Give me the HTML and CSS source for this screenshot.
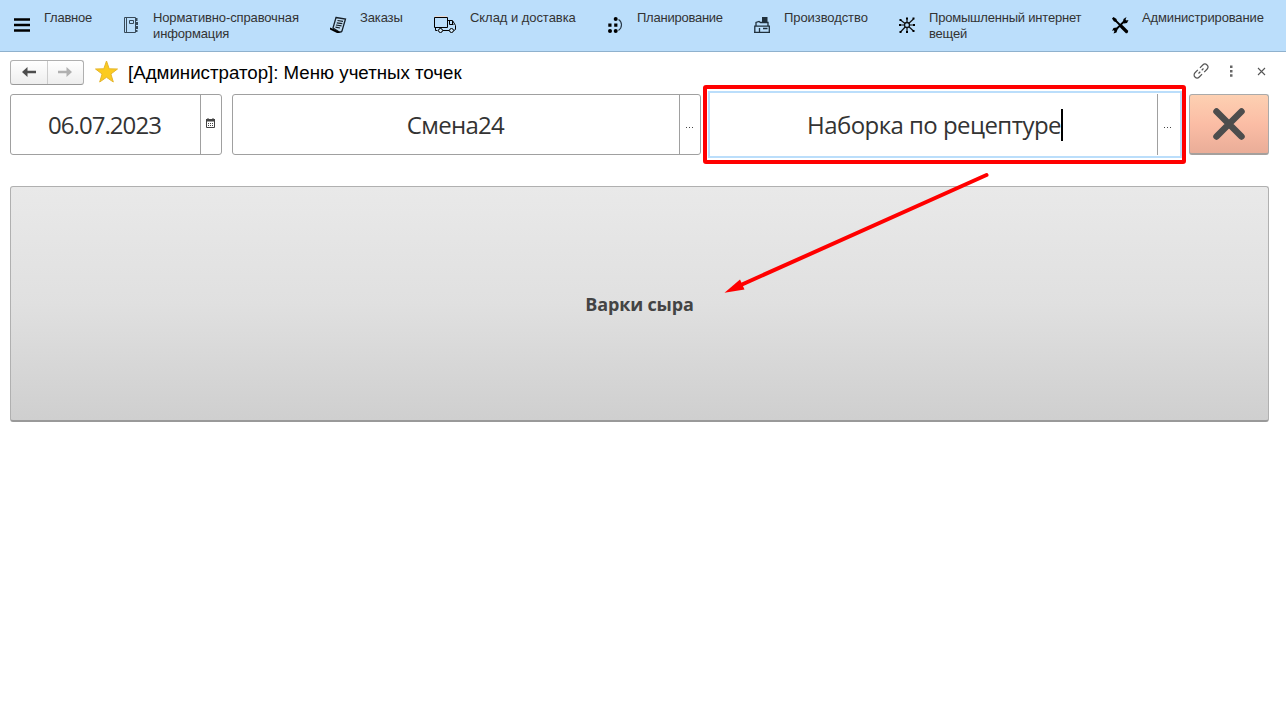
FILE: index.html
```html
<!DOCTYPE html>
<html lang="ru">
<head>
<meta charset="utf-8">
<title>Меню учетных точек</title>
<link rel="stylesheet" href="styles.css">
</head>
<body>
<nav class="sections">
  <a class="section"><svg class="icon" width="24" height="20" viewBox="0 0 24 20"><path d="M0 3.500h16M0 9h16M0 14.500h16" stroke="#000" stroke-width="2.600"/></svg><span class="label l1">Главное</span></a>
  <a class="section"><svg class="icon" width="24" height="20" viewBox="0 0 24 20"><path d="M1.500 1.500h11v15h-11zM3.500 1.500v15M6.500 4.500h4v3h-4z" fill="none" stroke="#384a59"/><path d="M13 2h1.500v3H13zM13 6h2v3h-2zM13 10h2v3h-2zM13 14h1.500v2H13z" fill="#384a59"/></svg><span class="label l2">Нормативно-справочная<br>информация</span></a>
  <a class="section"><svg class="icon" width="24" height="20" viewBox="0 0 24 20"><path d="M6 1.500 15.500 3 12 15Q10.500 17 8.500 15.500L3 12z" fill="#c0dbf0" stroke="#15202a" stroke-width="1.300"/><path d="M7.500 4.500l5.500.8M6.800 6.800l5.500.8M6 9l5.500.8M5.500 11.200l4.500.8" stroke="#15202a" stroke-width="1.200"/><path d="M0 11.500 8 15q1 1.500 2.500 0L9.500 17 7 17 0 13.500z"/></svg><span class="label l3">Заказы</span></a>
  <a class="section"><svg class="icon" width="24" height="20" viewBox="0 0 24 20"><path d="M3.500 14.500h-2v-3M.5 11.500V1.500h13v10H.5M13.500 4.500h5l3 5v4l-1.500 1M15 14.500H9M15.500 5v3.500h4M18.500 5v3" fill="none" stroke="#000"/><path d="M1 .5h12" stroke="#ead8ce"/><circle cx="6.500" cy="14.500" r="2" fill="#cfe7f7" stroke="#000"/><circle cx="17.500" cy="14.500" r="2" fill="#cfe7f7" stroke="#000"/></svg><span class="label l4">Склад и доставка</span></a>
  <a class="section"><svg class="icon" width="24" height="20" viewBox="0 0 24 20"><circle cx="8.700" cy="3" r="2"/><path d="M1.300 7.500h3.200v3.200H1.300zM7.200 7.500h3.200v3.200H7.200z"/><circle cx="3" cy="15" r="2"/><circle cx="8.700" cy="15" r="2"/><path d="M11.500 3.500c4 2.500 4 8 0 11" fill="none" stroke="#263746" stroke-width="1.100"/></svg><span class="label l5">Планирование</span></a>
  <a class="section"><svg class="icon" width="24" height="20" viewBox="0 0 24 20"><path d="M9 1h5.500v6H9z" fill="#20303c"/><path d="M3 10V6.500l3-1 1.500 1H15V10M1.800 16v-5.800h14.500V16M6.500 16v-4M10 12.500h4.500M1 16.300h16" fill="none" stroke="#20303c" stroke-width="1.300"/></svg><span class="label l6">Производство</span></a>
  <a class="section"><svg class="icon" width="24" height="20" viewBox="0 0 24 20"><path d="M9 9 2.500 4M9 9V2M9 9l6.500-6M9 9H2M9 9h7M9 9l-6.500 7M9 9v7M9 9l6.500 6" stroke="#111" stroke-width="1.200"/><circle cx="9" cy="9" r="2.500" fill="#bbdefb" stroke="#111" stroke-width="1.300"/><path d="M1.500 3h2v2h-2zM8 1.500h2v2H8zM14.500 1.500h2v2h-2zM1 8h2v2H1zM15 8h2v2h-2zM1.500 15h2v2h-2zM8 15h2v2H8zM14.500 14h2v2h-2z"/></svg><span class="label l7">Промышленный интернет<br>вещей</span></a>
  <a class="section"><svg class="icon" width="24" height="20" viewBox="0 0 24 20"><path d="M3 3l11 11M13.500 5 4 14.500" stroke="#000" stroke-width="1.800"/><path d="M10.500 10.500l5 5" stroke="#000" stroke-width="3.200" stroke-linecap="round"/><path d="M1 2.500 2.500 1l3 2 .5 3-3-.5zM12 6.500l.5-3.500L15.500 1 14.500 3.500l1 1 2-.5-1.500 3-3 .5zM1 15l1.500-3 3-.5 1 2L5.500 16.500 2.500 17.500l1-2.500-1-.7z"/></svg><span class="label l8">Администрирование</span></a>
</nav>
<header class="titlebar">
  <div class="history">
    <button class="step"><svg width="14" height="10" viewBox="0 0 14 10"><path d="M0 5 5.500 0v3.800H14v2.400H5.500V10z" fill="#4d4d4d"/></svg></button>
    <button class="step"><svg width="14" height="10" viewBox="0 0 14 10"><path d="M14 5 8.500 0v3.800H0v2.400h8.500V10z" fill="#b0b0b0"/></svg></button>
  </div>
  <svg class="star" width="24" height="23" viewBox="0 0 24 23"><path d="M12.500 1l2.700 7.800 8.300.2-6.600 5 2.400 8-6.800-4.700L5.700 22l2.400-8L1.500 9l8.300-.2z" fill="#fbcb20" stroke="#e5b52d"/></svg>
  <h1 class="title">[Администратор]: Меню учетных точек</h1>
  <div class="tools">
    <svg width="16" height="16" viewBox="0 0 16 16"><g fill="none" stroke="#555" stroke-width="1.200" transform="rotate(-45 8 8)"><path d="M6.500 5H2.500a3 3 0 0 0 0 6h4M9.500 5h4a3 3 0 0 1 0 6h-4M4.500 8h2.500M9 8h2.500"/></g></svg>
    <svg width="16" height="16" viewBox="0 0 16 16"><path d="M7 2.500h2.500V5H7zM7 7h2.500v2.500H7zM7 11.300h2.500v2.500H7z" fill="#666"/></svg>
    <svg width="16" height="16" viewBox="0 0 16 16"><path d="M5 5l7 7M12 5l-7 7" stroke="#555" stroke-width="1.100"/></svg>
  </div>
</header>
<main class="content">
  <div class="filters">
    <div class="field date"><span class="value v1">06.07.2023</span><span class="pick"><svg width="9" height="10" viewBox="0 0 9 10"><path d="M.5 1.500h8v8h-8z" fill="#fff" stroke="#444"/><path d="M0 1h9v2.500H0z" fill="#444"/><path d="M2 0v2M7 0v2" stroke="#444"/><path d="M2 5.500h5M2 7.500h5" stroke="#444" stroke-dasharray="1 1"/></svg></span></div>
    <div class="field shift"><span class="value v2">Смена24</span><span class="pick"><i class="dots"></i></span></div>
    <div class="highlight"><div class="field active"><span class="value v3">Наборка по рецептуре<i class="caret"></i></span><span class="pick"><i class="dots"></i></span></div></div>
    <button class="close"><svg width="34" height="34" viewBox="0 0 34 34"><path d="M4.500 4.500l25 25M29.500 4.500l-25 25" stroke="#4d4d4d" stroke-width="6.500" stroke-linecap="round"/></svg></button>
  </div>
  <button class="point"><span class="caption">Варки сыра</span></button>
</main>
<svg class="arrow" width="270" height="128" viewBox="0 0 270 128"><path d="M266.500 5 22 114.500" stroke="#f00" stroke-width="4" stroke-linecap="round"/><path d="M4.500 122.800 20 109.500 24.500 119.500z" fill="#f00"/></svg>
</body>
</html>
```
FILE: styles.css
```css
* { box-sizing: border-box; }
body { margin: 0; width: 1286px; height: 726px; overflow: hidden; background: #fff; font-family: "Liberation Sans", Arial, sans-serif; }
button { padding: 0; font: inherit; }

.sections { height: 52px; padding-left: 14px; background: #bbdefb; border-bottom: 1px solid #8fb1cd; display: grid; grid-template-columns: 109px 207px 104px 173px 146px 145px 213px 1fr; }
.section { display: flex; align-items: flex-start; color: #333; font-size: 13px; line-height: 16px; letter-spacing: -.13px; white-space: nowrap; }
.icon { flex: none; margin-top: 16px; }
.label { padding-top: 10px; margin-left: 6px; }
.l1 { letter-spacing: -.25px; }
.l4 { margin-left: 12px; letter-spacing: -.05px; }
.l5 { letter-spacing: -.24px; }
.l6, .l7, .l8 { margin-left: 7px; }
.l6 { letter-spacing: -.08px; }
.l7 { letter-spacing: -.2px; }

.titlebar { height: 42px; padding: 0 17px 0 10px; display: flex; align-items: center; }
.history { display: flex; width: 74px; height: 25px; margin-bottom: 2px; border: 1px solid #b0b0b0; border-bottom-color: #999; border-radius: 3px; background: linear-gradient(#fff, #eee); }
.step { flex: 1; display: flex; align-items: center; justify-content: center; border: 0; background: none; }
.step + .step { border-left: 1px solid #ccc; }
.star { margin: 0 10px 3px; }
.title { margin: 0; font-size: 18.7px; font-weight: 400; color: #000; white-space: nowrap; }
.tools { margin-left: auto; display: flex; gap: 14px; padding-bottom: 4px; }

.content { padding: 0 17px 0 10px; }
.filters { display: flex; height: 61px; }
.field { display: flex; height: 61px; border: 1px solid #a0a0a0; border-radius: 3px; background: #fff; color: #333; font-family: "Open Sans", "Noto Sans", sans-serif; font-size: 24px; line-height: 59px; }
.value { flex: 1; text-align: center; white-space: nowrap; }
.v1 { letter-spacing: -.95px; padding-right: 2px; }
.v2 { letter-spacing: -.7px; padding-right: 1px; }
.v3 { letter-spacing: -.55px; line-height: 61px; padding-left: 3px; }
.pick { width: 21px; border-left: 1px solid #a0a0a0; display: flex; align-items: center; justify-content: center; padding: 0 1px 1px 0; }
.date { width: 212px; }
.date .pick { padding-bottom: 3px; }
.shift { width: 469px; margin-left: 10px; }
.highlight { width: 483px; height: 79px; margin: -9px 0 0 2px; border: 4px solid #f00; border-radius: 3px; padding: 2px 0 0 1px; }
.active { height: 67px; border: 2px solid #bbdefb; border-radius: 0; padding: 1px 0; }
.active .pick { width: 23px; padding-right: 3px; }
.dots { width: 7px; height: 1px; margin-top: 6px; background: repeating-linear-gradient(90deg, #444 0 1px, transparent 1px 3px); }
.caret { display: inline-block; width: 2px; height: 32px; background: #000; vertical-align: -7px; }
.close { width: 80px; height: 61px; margin-left: 3px; border: 1px solid #aaa; border-bottom: 2px solid #a5a09d; border-radius: 3px; background: linear-gradient(#fdd0b2, #fbbda5 50%, #eaad98); display: flex; align-items: center; justify-content: center; }
.point { display: flex; align-items: center; justify-content: center; width: 100%; height: 236px; margin-top: 31px; border: 1px solid #b0b0b0; border-bottom: 2px solid #999; border-radius: 3px; background: linear-gradient(#e9e9e9, #e0e0e0 50%, #cfcfcf); }
.caption { font: 700 18px "Open Sans", "Noto Sans", sans-serif; letter-spacing: -.15px; color: #444; }
.arrow { position: absolute; left: 720px; top: 170px; }
```
